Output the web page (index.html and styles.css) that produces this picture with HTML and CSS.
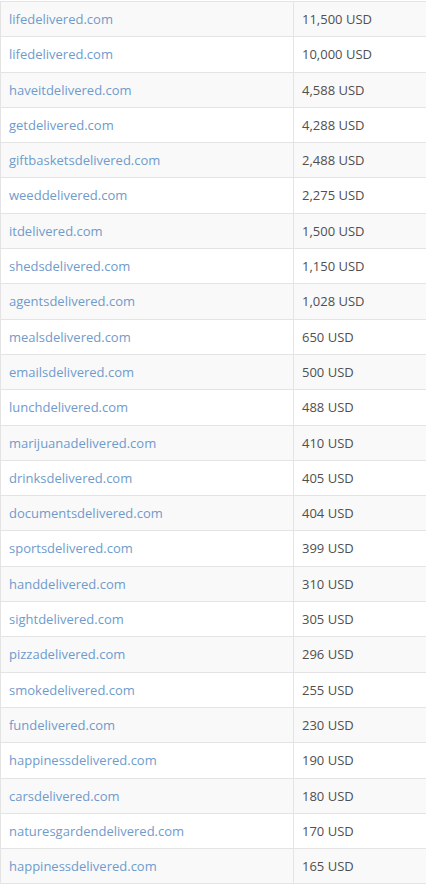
FILE: index.html
```html
<!DOCTYPE html>
<html>
<head>
<meta charset="utf-8">
<link rel="stylesheet" href="styles.css">
</head>
<body>
<table class="sales">
<tbody>
<tr><td><a href="#">lifedelivered.com</a></td><td>11,500 USD</td></tr>
<tr><td><a href="#">lifedelivered.com</a></td><td>10,000 USD</td></tr>
<tr><td><a href="#">haveitdelivered.com</a></td><td>4,588 USD</td></tr>
<tr><td><a href="#">getdelivered.com</a></td><td>4,288 USD</td></tr>
<tr><td><a href="#">giftbasketsdelivered.com</a></td><td>2,488 USD</td></tr>
<tr><td><a href="#">weeddelivered.com</a></td><td>2,275 USD</td></tr>
<tr><td><a href="#">itdelivered.com</a></td><td>1,500 USD</td></tr>
<tr><td><a href="#">shedsdelivered.com</a></td><td>1,150 USD</td></tr>
<tr><td><a href="#">agentsdelivered.com</a></td><td>1,028 USD</td></tr>
<tr><td><a href="#">mealsdelivered.com</a></td><td>650 USD</td></tr>
<tr><td><a href="#">emailsdelivered.com</a></td><td>500 USD</td></tr>
<tr><td><a href="#">lunchdelivered.com</a></td><td>488 USD</td></tr>
<tr><td><a href="#">marijuanadelivered.com</a></td><td>410 USD</td></tr>
<tr><td><a href="#">drinksdelivered.com</a></td><td>405 USD</td></tr>
<tr><td><a href="#">documentsdelivered.com</a></td><td>404 USD</td></tr>
<tr><td><a href="#">sportsdelivered.com</a></td><td>399 USD</td></tr>
<tr><td><a href="#">handdelivered.com</a></td><td>310 USD</td></tr>
<tr><td><a href="#">sightdelivered.com</a></td><td>305 USD</td></tr>
<tr><td><a href="#">pizzadelivered.com</a></td><td>296 USD</td></tr>
<tr><td><a href="#">smokedelivered.com</a></td><td>255 USD</td></tr>
<tr><td><a href="#">fundelivered.com</a></td><td>230 USD</td></tr>
<tr><td><a href="#">happinessdelivered.com</a></td><td>190 USD</td></tr>
<tr><td><a href="#">carsdelivered.com</a></td><td>180 USD</td></tr>
<tr><td><a href="#">naturesgardendelivered.com</a></td><td>170 USD</td></tr>
<tr><td><a href="#">happinessdelivered.com</a></td><td>165 USD</td></tr>
</tbody>
</table>
</body>
</html>
```
FILE: styles.css
```css
html, body {
  margin: 0;
  padding: 0;
  background: #ffffff;
}
body {
  font-family: "Open Sans", "DejaVu Sans", sans-serif;
  font-size: 13px;
  color: #505050;
}
.sales {
  border-collapse: collapse;
  width: 440px;
  margin-left: 0;
  margin-top: 1px;
}
.sales td {
  border: 1px solid #e4e4e4;
  padding: 8px 8px;
  line-height: 18.3px;
  vertical-align: middle;
  white-space: nowrap;
}
.sales td:first-child {
  width: 276px;
}
.sales tr:nth-child(odd) td {
  background: #f9f9f9;
}
.sales a {
  color: #6f9bcc;
  text-decoration: none;
}
```
